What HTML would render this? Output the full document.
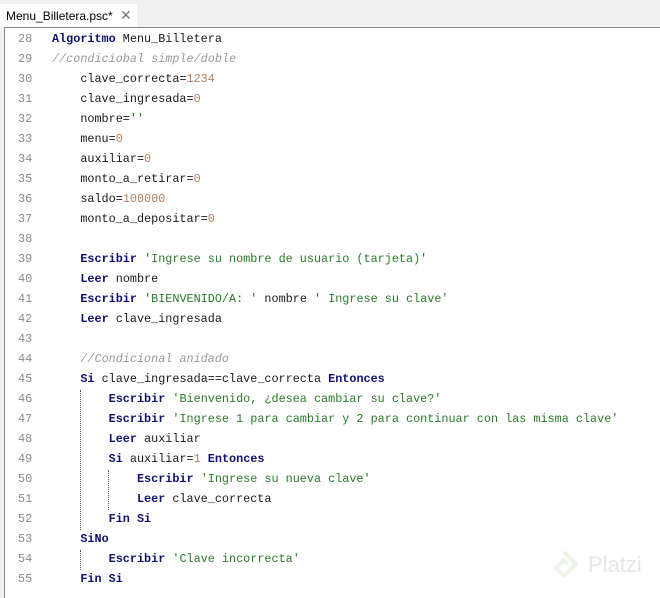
<!DOCTYPE html>
<html><head><meta charset="utf-8"><style>
body{margin:0;width:660px;height:589px;background:#f0f0f0;position:relative;overflow:hidden;font-family:"Liberation Mono",monospace;}
.tab{position:absolute;left:0;top:4px;width:137px;height:24px;background:#fff;font:12px "Liberation Sans",sans-serif;color:#000;}
.tab span{position:absolute;left:6px;top:5px}
.tab b{position:absolute;left:120px;top:3px;font-weight:normal;color:#777;font-size:14px}
.ed{position:absolute;left:4px;top:27px;width:660px;height:570px;background:#fff;border-left:1px solid #888;border-top:1px solid #888;}
.l{position:absolute;left:0;height:20px;line-height:20px;font-size:11.8px;white-space:pre;color:#1a1a1a}
.n{position:absolute;left:13px;width:22px;color:#8a8a8a;}
.c{position:absolute;left:47px}
k{color:#101070;font-weight:bold}
s{color:#2a7a2a;text-decoration:none}
m{color:#b88060}
i{color:#999;}
.g{position:absolute;border-left:1px dotted #555;width:0}
.pl{position:absolute;left:588px;top:552px;font:22px "Liberation Sans",sans-serif;color:#e6e6e6}
</style></head><body>
<div class="tab"><span>Menu_Billetera.psc*</span><b>✕</b></div>
<div class="ed">
<div class="l" style="top:1px"><span class="n">28</span><span class="c"><k>Algoritmo</k> Menu_Billetera</span></div>
<div class="l" style="top:21px"><span class="n">29</span><span class="c"><i>//condiciobal simple/doble</i></span></div>
<div class="l" style="top:41px"><span class="n">30</span><span class="c">    clave_correcta=<m>1234</m></span></div>
<div class="l" style="top:61px"><span class="n">31</span><span class="c">    clave_ingresada=<m>0</m></span></div>
<div class="l" style="top:81px"><span class="n">32</span><span class="c">    nombre=<s>''</s></span></div>
<div class="l" style="top:101px"><span class="n">33</span><span class="c">    menu=<m>0</m></span></div>
<div class="l" style="top:121px"><span class="n">34</span><span class="c">    auxiliar=<m>0</m></span></div>
<div class="l" style="top:141px"><span class="n">35</span><span class="c">    monto_a_retirar=<m>0</m></span></div>
<div class="l" style="top:161px"><span class="n">36</span><span class="c">    saldo=<m>100000</m></span></div>
<div class="l" style="top:181px"><span class="n">37</span><span class="c">    monto_a_depositar=<m>0</m></span></div>
<div class="l" style="top:201px"><span class="n">38</span></div>
<div class="l" style="top:221px"><span class="n">39</span><span class="c">    <k>Escribir</k> <s>'Ingrese su nombre de usuario (tarjeta)'</s></span></div>
<div class="l" style="top:241px"><span class="n">40</span><span class="c">    <k>Leer</k> nombre</span></div>
<div class="l" style="top:261px"><span class="n">41</span><span class="c">    <k>Escribir</k> <s>'BIENVENIDO/A: '</s> nombre <s>' Ingrese su clave'</s></span></div>
<div class="l" style="top:281px"><span class="n">42</span><span class="c">    <k>Leer</k> clave_ingresada</span></div>
<div class="l" style="top:301px"><span class="n">43</span></div>
<div class="l" style="top:321px"><span class="n">44</span><span class="c">    <i>//Condicional anidado</i></span></div>
<div class="l" style="top:341px"><span class="n">45</span><span class="c">    <k>Si</k> clave_ingresada==clave_correcta <k>Entonces</k></span></div>
<div class="l" style="top:361px"><span class="n">46</span><span class="c">        <k>Escribir</k> <s>'Bienvenido, ¿desea cambiar su clave?'</s></span></div>
<div class="l" style="top:381px"><span class="n">47</span><span class="c">        <k>Escribir</k> <s>'Ingrese 1 para cambiar y 2 para continuar con las misma clave'</s></span></div>
<div class="l" style="top:401px"><span class="n">48</span><span class="c">        <k>Leer</k> auxiliar</span></div>
<div class="l" style="top:421px"><span class="n">49</span><span class="c">        <k>Si</k> auxiliar=<m>1</m> <k>Entonces</k></span></div>
<div class="l" style="top:441px"><span class="n">50</span><span class="c">            <k>Escribir</k> <s>'Ingrese su nueva clave'</s></span></div>
<div class="l" style="top:461px"><span class="n">51</span><span class="c">            <k>Leer</k> clave_correcta</span></div>
<div class="l" style="top:481px"><span class="n">52</span><span class="c">        <k>Fin Si</k></span></div>
<div class="l" style="top:501px"><span class="n">53</span><span class="c">    <k>SiNo</k></span></div>
<div class="l" style="top:521px"><span class="n">54</span><span class="c">        <k>Escribir</k> <s>'Clave incorrecta'</s></span></div>
<div class="l" style="top:541px"><span class="n">55</span><span class="c">    <k>Fin Si</k></span></div>
</div>
<div class="g" style="left:80px;top:390px;height:140px"></div>
<div class="g" style="left:80px;top:550px;height:20px"></div>
<div class="g" style="left:108px;top:470px;height:40px"></div>
<svg style="position:absolute;left:546px;top:548px" width="36" height="36" viewBox="0 0 36 36"><path d="M18 4 L30 16 L18 28 L10 20 L18 12 L22 16" fill="none" stroke="#eef4e4" stroke-width="4"/></svg>
<div class="pl">Platzi</div>
</body></html>
